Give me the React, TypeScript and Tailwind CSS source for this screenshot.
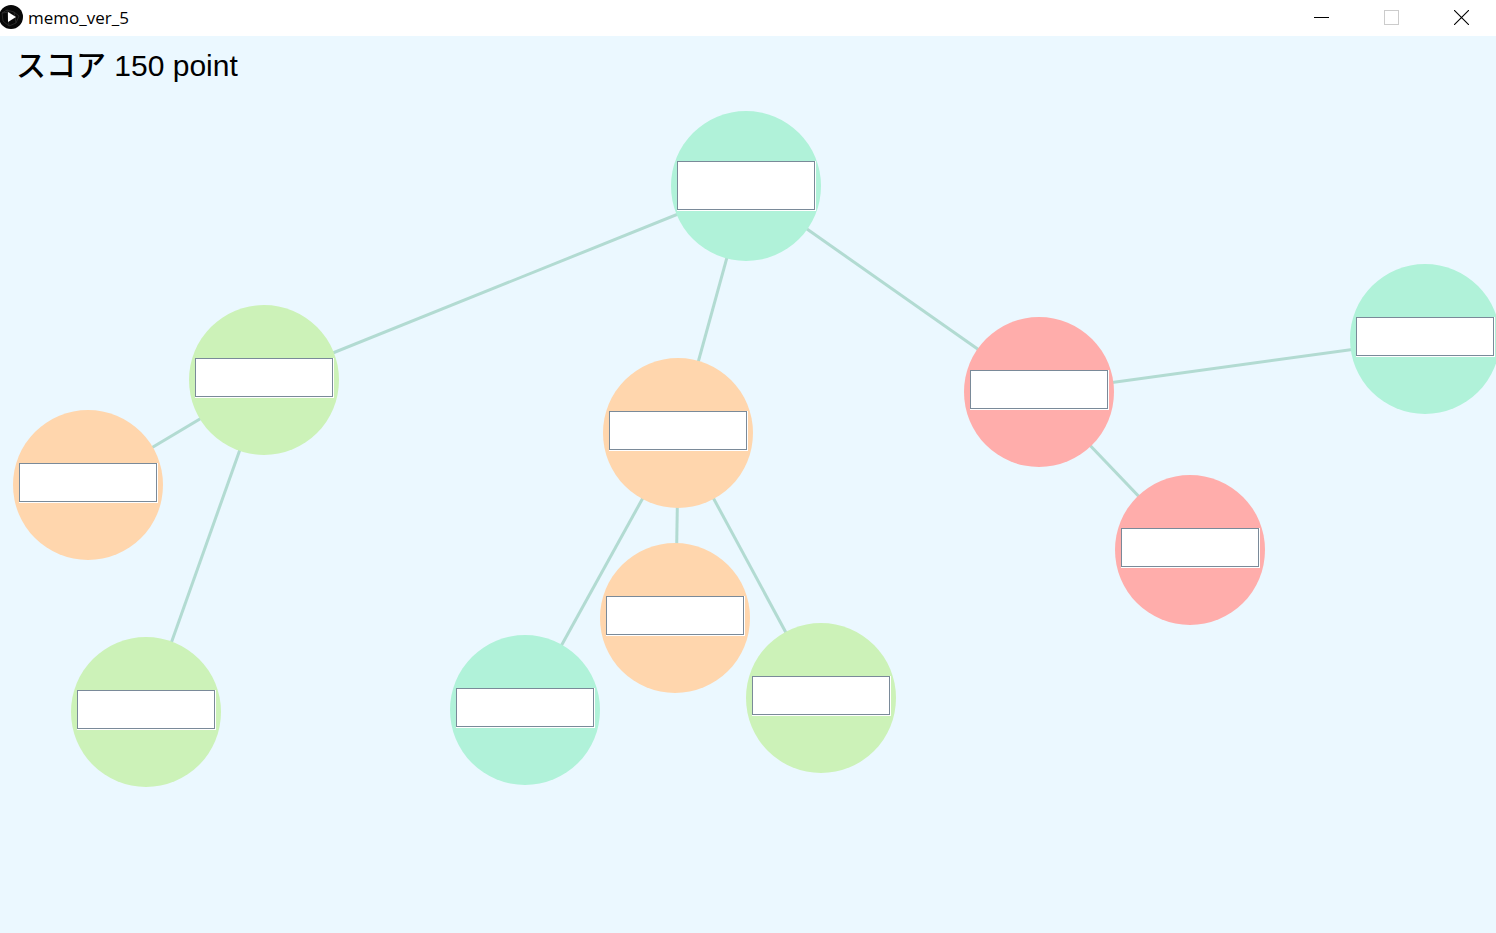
type Tone = "mint" | "lime" | "peach" | "rose";

interface MemoNode {
  id: string;
  x: number;
  y: number;
  tone: Tone;
  parent?: string;
}

const TONES: Record<Tone, string> = {
  mint: "bg-[#b0f2d9]",
  lime: "bg-[#ccf2b8]",
  peach: "bg-[#ffd6ad]",
  rose: "bg-[#ffadab]",
};

// Centres of the nodes on the free canvas.
const NODES: MemoNode[] = [
  { id: "root", x: 746, y: 150, tone: "mint" },
  { id: "left", x: 264, y: 344, tone: "lime", parent: "root" },
  { id: "middle", x: 678, y: 397, tone: "peach", parent: "root" },
  { id: "right", x: 1039, y: 356, tone: "rose", parent: "root" },
  { id: "left-1", x: 88, y: 449, tone: "peach", parent: "left" },
  { id: "left-2", x: 146, y: 676, tone: "lime", parent: "left" },
  { id: "middle-1", x: 525, y: 674, tone: "mint", parent: "middle" },
  { id: "middle-2", x: 675, y: 582, tone: "peach", parent: "middle" },
  { id: "middle-3", x: 821, y: 662, tone: "lime", parent: "middle" },
  { id: "right-1", x: 1425, y: 303, tone: "mint", parent: "right" },
  { id: "right-2", x: 1190, y: 514, tone: "rose", parent: "right" },
];

function TitleBar() {
  return (
    <header className="flex h-9 shrink-0 items-start justify-between bg-white">
      <div className="flex h-9 items-center gap-1">
        <svg className="size-6 overflow-visible" viewBox="0 0 24 24" aria-hidden="true">
          <circle cx="11" cy="11" r="12" fill="#080808" />
          <path
            d="M2 7 7 4l7 2 5 4-3 7-7 3-6-5zM7 4l2 16M14 6l2 11M2 7l8-1"
            fill="none"
            stroke="#303030"
            strokeWidth="0.8"
          />
          <path d="M8 6v10l8-5z" fill="#fff" />
        </svg>
        <h1 className="font-['Open_Sans','Noto_Sans',sans-serif] text-[17px] leading-6 text-black">
          memo_ver_5
        </h1>
      </div>
      <div className="flex h-[35px]">
        <button type="button" aria-label="Minimize" className="flex w-[70px] items-center justify-center">
          <svg className="size-[15px]" viewBox="0 0 15 15" shapeRendering="crispEdges">
            <path d="M0 7.5h15" stroke="#000" />
          </svg>
        </button>
        <button type="button" aria-label="Maximize" disabled className="flex w-[70px] items-center justify-center">
          <svg className="size-[15px]" viewBox="0 0 15 15" shapeRendering="crispEdges">
            <path d="M.5.5h14v14H.5z" fill="none" stroke="#ccc" />
          </svg>
        </button>
        <button type="button" aria-label="Close" className="flex w-[70px] items-center justify-center">
          <svg className="size-[15px]" viewBox="0 0 15 15">
            <path d="m0 0 15 15M15 0 0 15" stroke="#000" strokeWidth="1.1" />
          </svg>
        </button>
      </div>
    </header>
  );
}

function Memo({ node }: { node: MemoNode }) {
  const isRoot = !node.parent;
  return (
    <div
      className={`absolute size-[150px] rounded-full ${TONES[node.tone]}`}
      style={{ left: node.x - 75, top: node.y - 75 }}
    >
      <div
        className={`mx-[6px] w-[139px] border-r border-b border-white ${
          isRoot ? "mt-[50px] h-[50px]" : "mt-[53px] h-10"
        }`}
      >
        <input
          type="text"
          aria-label={`Memo ${node.id}`}
          className="block size-full border border-[#7a8a99] bg-white px-2 font-['Liberation_Sans','Noto_Sans_CJK_JP',sans-serif] text-base text-black outline-none"
        />
      </div>
    </div>
  );
}

export default function App() {
  const byId = new Map(NODES.map((n) => [n.id, n]));
  return (
    <div className="flex min-h-screen flex-col">
      <TitleBar />
      <main className="relative grow overflow-hidden bg-[#ebf8ff]">
        <svg className="absolute inset-0 size-full" aria-hidden="true">
          <g stroke="#b2dbd2" strokeWidth="3" transform="translate(0.5 0.5)">
            {NODES.map((n) => {
              const p = n.parent ? byId.get(n.parent) : undefined;
              return p ? <line key={n.id} x1={p.x} y1={p.y} x2={n.x} y2={n.y} /> : null;
            })}
          </g>
        </svg>
        <p className="relative px-4 pt-3 font-['Liberation_Sans','Noto_Sans_CJK_JP',sans-serif] text-[30px] leading-9 text-black">
          <span className="font-medium">スコア</span> 150 point
        </p>
        {NODES.map((n) => (
          <Memo key={n.id} node={n} />
        ))}
      </main>
    </div>
  );
}
